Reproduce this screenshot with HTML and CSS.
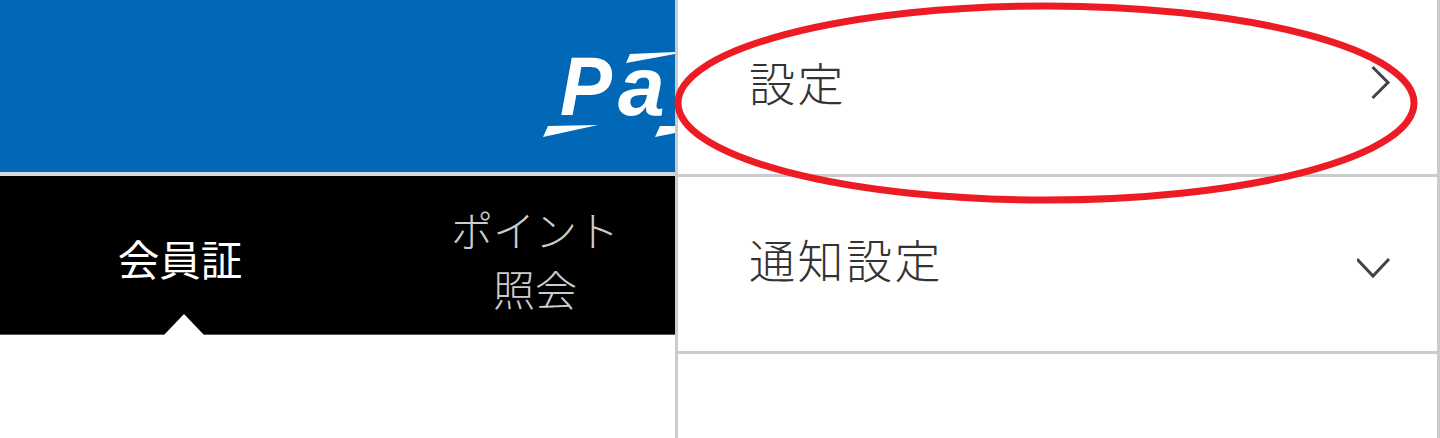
FILE: index.html
```html
<!DOCTYPE html>
<html lang="ja">
<head>
<meta charset="utf-8">
<title>設定</title>
<link rel="stylesheet" href="styles.css">
</head>
<body>
<div class="page">
  <main class="left">
    <header class="brand">
      <svg class="logo" width="135" height="172" viewBox="540 0 135 172">
        <text class="logo-text" x="560" y="115" textLength="52" lengthAdjust="spacingAndGlyphs">P</text>
        <text class="logo-text" x="618" y="115">a</text>
        <polygon class="logo-shape" points="626,63 630,54 675,52 675,54"/>
        <polygon class="logo-shape" points="543,137 548,126 598,125"/>
        <polygon class="logo-shape" points="655,137 660,126 675,126 675,133"/>
      </svg>
    </header>
    <nav class="tabs">
      <div class="tab active">会員証</div>
      <div class="tab">ポイント<br>照会</div>
    </nav>
  </main>
  <aside class="menu">
    <div class="row">
      <span>設定</span>
      <svg class="chev" width="40" height="48" viewBox="0 0 40 48"><path d="M15.500 10L31 25.500L15.500 41"/></svg>
    </div>
    <div class="row">
      <span>通知設定</span>
      <svg class="chev" width="40" height="48" viewBox="0 0 40 48"><path d="M0 25L16 42L32 25"/></svg>
    </div>
  </aside>
  <svg class="mark" width="1440" height="438" viewBox="0 0 1440 438">
    <ellipse cx="1046" cy="103" rx="368" ry="97"/>
  </svg>
</div>
</body>
</html>
```

FILE: styles.css
```css
* { box-sizing: border-box; }
html, body { margin: 0; padding: 0; background: #fff; }
body { font-family: "Noto Sans CJK JP", "Noto Sans", sans-serif; overflow: hidden; }
.page { position: relative; display: flex; width: 1440px; height: 438px; overflow: hidden; }
.left { width: 675px; flex: none; overflow: hidden; }
.brand { height: 176px; background: #0068b7; border-bottom: 4px solid #d8d8d8; display: flex; justify-content: flex-end; }
.logo { display: block; }
.logo-text { font-family: "Liberation Sans", sans-serif; font-weight: 700; font-style: italic; font-size: 84px; fill: #fff; }
.logo-shape { fill: #fff; }
.tabs { height: 159px; background: #000; border-bottom: 1px solid #555; display: grid; grid-template-columns: 360px 350px; width: 710px; }
.tab { display: flex; align-items: center; justify-content: center; text-align: center; position: relative; color: #ccc; font-size: 42px; line-height: 59px; font-weight: 300; padding-top: 6px; }
.tab.active { color: #fff; font-size: 41.500px; font-weight: 400; }
.tab.active::after { content: ""; position: absolute; left: 164px; bottom: -1px; border-left: 20px solid transparent; border-right: 20px solid transparent; border-bottom: 21px solid #fff; }
.menu { flex: 1; height: 438px; border-left: 3px solid #ccc; border-right: 3px solid #ccc; }
.row { height: 177px; border-bottom: 3px solid #ccc; display: flex; align-items: center; justify-content: space-between; padding: 0 40px 12px 71px; color: #333; font-size: 46px; letter-spacing: 2.500px; font-weight: 300; }
.chev { flex: none; }
.chev path { fill: none; stroke: #444; stroke-width: 3; }
.mark { position: absolute; left: 0; top: 0; pointer-events: none; }
.mark ellipse { fill: none; stroke: #ed1c24; stroke-width: 7; }
```
